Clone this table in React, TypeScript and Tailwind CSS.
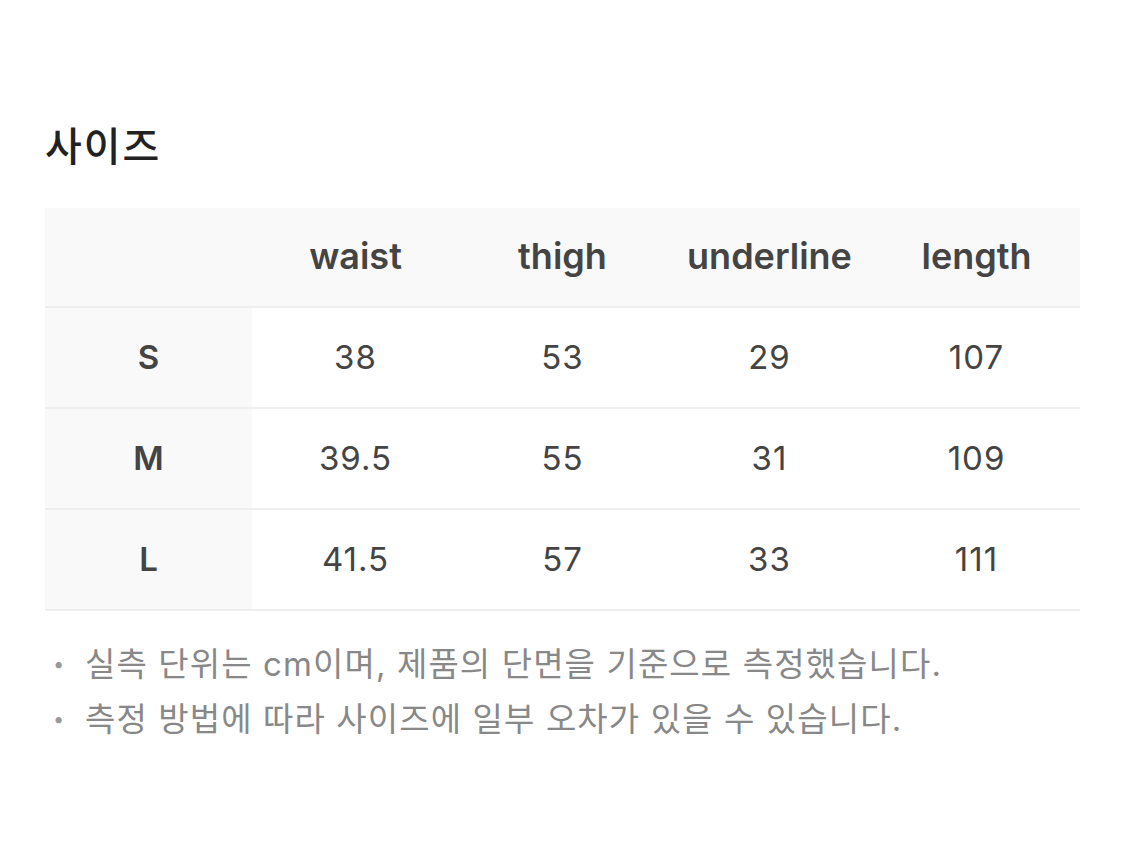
import React from "react";

const font = { fontFamily: 'Inter, "Noto Sans CJK KR", sans-serif' };

const rows = [
  ["S", "38", "53", "29", "107"],
  ["M", "39.5", "55", "31", "109"],
  ["L", "41.5", "57", "33", "111"],
];

export default function App() {
  return (
    <div className="w-[1125px] h-[850px] bg-white" style={font}>
      <div className="pl-[45px] pr-[45px] pt-[121px]">
        <h2 className="text-[40px] leading-[52px] font-medium text-[#222] tracking-[2px]">사이즈</h2>
        <div className="mt-[35px] w-[1035px]">
          <div className="grid grid-cols-5 h-[100px] bg-[#f9f9f9] border-b-2 border-[#eeeeee]">
            <div />
            {["waist", "thigh", "underline", "length"].map((h) => (
              <div key={h} className="flex items-center justify-center text-[36px] font-semibold text-[#444] pb-[2px]">
                {h}
              </div>
            ))}
          </div>
          {rows.map((r) => (
            <div key={r[0]} className="grid grid-cols-5 h-[101px] border-b-2 border-[#eeeeee]">
              {r.map((c, i) => (
                <div
                  key={i}
                  className={
                    "flex items-center justify-center text-[33px] text-[#444] " +
                    (i === 0 ? "bg-[#f9f9f9] font-semibold" : "tracking-[1px]")
                  }
                >
                  {c}
                </div>
              ))}
            </div>
          ))}
        </div>
        <ul className="mt-[31px] flex flex-col gap-[11px] text-[33px] leading-[44px] text-[#888] tracking-[1.1px]">
          <li className="flex items-center">
            <span className="w-[40px] pl-[8px] text-[20px] text-[#999]">•</span>
            <span>실측 단위는 cm이며, 제품의 단면을 기준으로 측정했습니다.</span>
          </li>
          <li className="flex items-center">
            <span className="w-[40px] pl-[8px] text-[20px] text-[#999]">•</span>
            <span>측정 방법에 따라 사이즈에 일부 오차가 있을 수 있습니다.</span>
          </li>
        </ul>
      </div>
    </div>
  );
}
